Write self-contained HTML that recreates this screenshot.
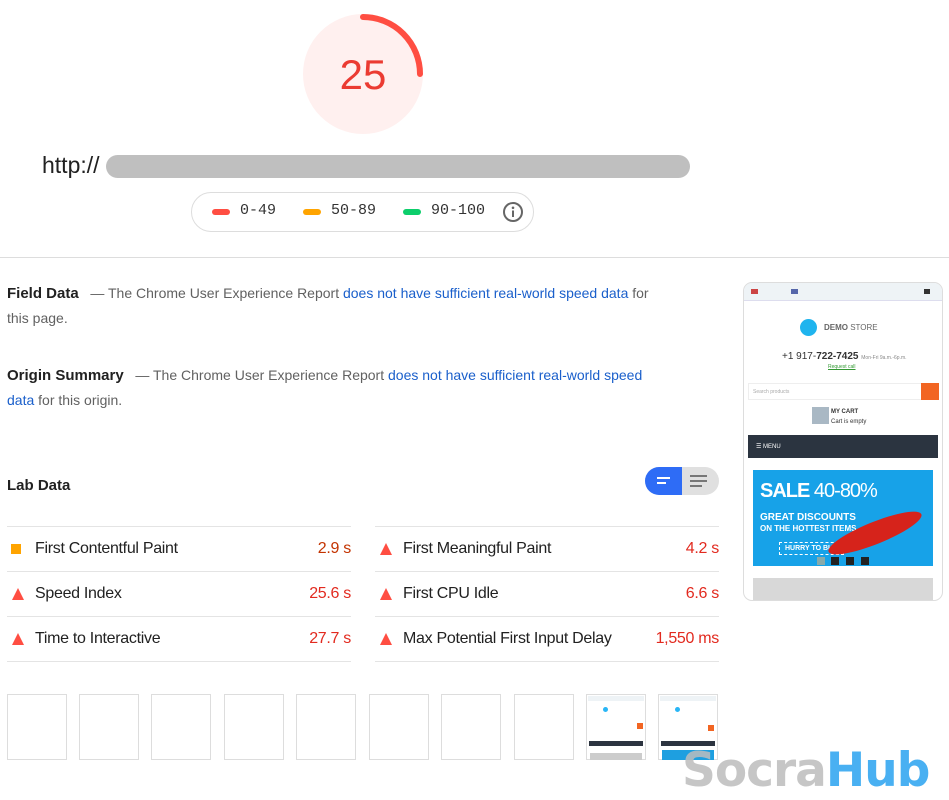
<!DOCTYPE html>
<html><head><meta charset="utf-8"><style>
*{box-sizing:border-box;margin:0;padding:0}
body{width:949px;height:800px;overflow:hidden;background:#fff;font-family:"Liberation Sans",sans-serif;position:relative;color:#212121}
.a{position:absolute}
.t{font-size:14px;color:#616161;line-height:25px}
.t b{font-weight:bold;color:#212121;font-size:15px}
.t a{color:#1a5fcb;text-decoration:none}
.row{position:absolute;height:45px;border-top:1px solid #e4e4e4;font-size:16px;display:flex;align-items:center}
.row .n{flex:1;padding-left:28px;color:#212121;letter-spacing:-.3px}
.row .v{color:#e22a1f;letter-spacing:-.3px}
.tri{position:absolute;left:5px;top:16px;width:0;height:0;border-left:6px solid transparent;border-right:6px solid transparent;border-bottom:12px solid #ff4e42}
.thumb{position:absolute;top:694px;width:60px;height:66px;border:1px solid #ddd}
</style></head><body>
<svg class="a" style="left:300px;top:11px" width="126" height="126" viewBox="0 0 126 126">
<circle cx="63" cy="63" r="60" fill="#fff0ef"/>
<path d="M63 6 A57 57 0 0 1 120 63" fill="none" stroke="#ff4e42" stroke-width="6" stroke-linecap="round"/>
<text x="63" y="78" text-anchor="middle" font-family="Liberation Sans,sans-serif" font-size="42" fill="#eb3b32" style="font-weight:300">25</text>
</svg>
<div class="a" style="left:42px;top:152px;font-size:23px;color:#212121">http://</div>
<div class="a" style="left:106px;top:155px;width:584px;height:23px;background:#bfbfbf;border-radius:12px"></div>
<div class="a" style="left:191px;top:192px;width:343px;height:40px;border:1px solid #ddd;border-radius:20px"></div>
<div class="a" style="left:212px;top:209px;width:18px;height:6px;border-radius:3px;background:#ff4e42"></div>
<div class="a" style="left:240px;top:202px;font:15px 'Liberation Mono',monospace;color:#333">0-49</div>
<div class="a" style="left:303px;top:209px;width:18px;height:6px;border-radius:3px;background:#ffa400"></div>
<div class="a" style="left:331px;top:202px;font:15px 'Liberation Mono',monospace;color:#333">50-89</div>
<div class="a" style="left:403px;top:209px;width:18px;height:6px;border-radius:3px;background:#0cce6b"></div>
<div class="a" style="left:431px;top:202px;font:15px 'Liberation Mono',monospace;color:#333">90-100</div>
<svg class="a" style="left:502px;top:201px" width="22" height="22" viewBox="0 0 22 22"><circle cx="11" cy="11" r="9" fill="none" stroke="#666" stroke-width="2"/><rect x="10" y="9.5" width="2" height="6.5" fill="#666"/><circle cx="11" cy="6.8" r="1.3" fill="#666"/></svg>
<div class="a" style="left:0;top:257px;width:949px;height:1px;background:#ddd"></div>

<div class="a t" style="left:7px;top:281px;width:660px"><b>Field Data</b> &nbsp; — The Chrome User Experience Report <a>does not have sufficient real-world speed data</a> for this page.</div>
<div class="a t" style="left:7px;top:363px;width:650px"><b>Origin Summary</b> &nbsp; — The Chrome User Experience Report <a>does not have sufficient real-world speed data</a> for this origin.</div>
<div class="a" style="left:7px;top:477px;font-size:15px;font-weight:bold;color:#212121">Lab Data</div>
<div class="a" style="left:645px;top:467px;width:74px;height:28px;border-radius:14px;background:#e0e0e0;overflow:hidden">
<div style="position:absolute;left:0;top:0;width:37px;height:28px;background:#2e6cf6"></div>
<div style="position:absolute;left:12px;top:10px;width:13px;height:2px;background:#fff"></div>
<div style="position:absolute;left:12px;top:15px;width:9px;height:2px;background:#fff"></div>
<div style="position:absolute;left:45px;top:8px;width:17px;height:2px;background:#777"></div>
<div style="position:absolute;left:45px;top:13px;width:17px;height:2px;background:#777"></div>
<div style="position:absolute;left:45px;top:18px;width:12px;height:2px;background:#777"></div>
</div>

<div class="row" style="left:7px;top:526px;width:344px"><div style="position:absolute;left:4px;top:17px;width:10px;height:10px;background:#ffa400"></div><span class="n">First Contentful Paint</span><span class="v" style="color:#c33300">2.9 s</span></div>
<div class="row" style="left:7px;top:571px;width:344px"><div class="tri"></div><span class="n">Speed Index</span><span class="v">25.6 s</span></div>
<div class="row" style="left:7px;top:616px;width:344px;border-bottom:1px solid #e4e4e4;height:46px"><div class="tri"></div><span class="n">Time to Interactive</span><span class="v">27.7 s</span></div>
<div class="row" style="left:375px;top:526px;width:344px"><div class="tri"></div><span class="n">First Meaningful Paint</span><span class="v">4.2 s</span></div>
<div class="row" style="left:375px;top:571px;width:344px"><div class="tri"></div><span class="n">First CPU Idle</span><span class="v">6.6 s</span></div>
<div class="row" style="left:375px;top:616px;width:344px;border-bottom:1px solid #e4e4e4;height:46px"><div class="tri"></div><span class="n">Max Potential First Input Delay</span><span class="v">1,550 ms</span></div>

<div class="thumb" style="left:7px"></div><div class="thumb" style="left:79px"></div><div class="thumb" style="left:151px"></div><div class="thumb" style="left:224px"></div><div class="thumb" style="left:296px"></div><div class="thumb" style="left:369px"></div><div class="thumb" style="left:441px"></div><div class="thumb" style="left:514px"></div>
<div class="thumb" style="left:586px;background:#fff"><div style="position:absolute;left:1px;top:1px;width:56px;height:5px;background:#eef3f6"></div><div style="position:absolute;left:16px;top:12px;width:5px;height:5px;border-radius:3px;background:#29b6f6"></div><div style="position:absolute;left:50px;top:28px;width:6px;height:6px;background:#f26522"></div><div style="position:absolute;left:2px;top:46px;width:54px;height:5px;background:#2c3440"></div><div style="position:absolute;left:3px;top:58px;width:52px;height:7px;background:#ccc"></div></div>
<div class="thumb" style="left:658px"><div style="position:absolute;left:1px;top:1px;width:56px;height:5px;background:#eef3f6"></div><div style="position:absolute;left:16px;top:12px;width:5px;height:5px;border-radius:3px;background:#29b6f6"></div><div style="position:absolute;left:49px;top:30px;width:6px;height:6px;background:#f26522"></div><div style="position:absolute;left:2px;top:46px;width:54px;height:5px;background:#2c3440"></div><div style="position:absolute;left:3px;top:55px;width:52px;height:10px;background:#1e9fe0"></div></div>

<div class="a" style="left:743px;top:282px;width:200px;height:319px;border:1px solid #ddd;border-radius:9px;overflow:hidden;background:#fff">
<div style="position:absolute;left:0;top:0;width:200px;height:18px;background:#eef3f6;border-bottom:1px solid #dde"></div>
<div style="position:absolute;left:7px;top:6px;width:7px;height:5px;background:#c44"></div>
<div style="position:absolute;left:47px;top:6px;width:7px;height:5px;background:#56a"></div>
<div style="position:absolute;left:180px;top:6px;width:6px;height:5px;background:#333"></div>
<div style="position:absolute;left:56px;top:36px;width:17px;height:17px;border-radius:50%;background:#1fb4ee"></div>
<div style="position:absolute;left:80px;top:40px;font-size:8px;color:#666"><b>DEMO</b> STORE</div>
<div style="position:absolute;left:38px;top:68px;font-size:10px;color:#333">+1 917-<b>722-7425</b> <span style="font-size:5px;color:#888">Mon-Fri 9a.m.-6p.m.</span></div>
<div style="position:absolute;left:84px;top:81px;font-size:5px;color:#393;text-decoration:underline">Request call</div>
<div style="position:absolute;left:4px;top:100px;width:174px;height:17px;border:1px solid #eee;font-size:5px;color:#aaa;padding:5px 4px">Search products</div>
<div style="position:absolute;left:177px;top:100px;width:18px;height:17px;background:#f26522"></div>
<div style="position:absolute;left:68px;top:124px;width:17px;height:17px;background:#a9b8c4"></div>
<div style="position:absolute;left:87px;top:124px;font-size:6px;color:#333;line-height:10px"><b>MY CART</b><br>Cart is empty</div>
<div style="position:absolute;left:4px;top:152px;width:190px;height:23px;background:#2b3440;color:#fff;font-size:6px;padding:8px 8px">☰ MENU</div>
<div style="position:absolute;left:9px;top:187px;width:180px;height:96px;background:#17a2e8;color:#fff;overflow:hidden">
<div style="position:absolute;left:7px;top:10px;font-size:20px;font-weight:bold;letter-spacing:-1px">SALE <span style="font-weight:normal">40-80%</span></div>
<div style="position:absolute;left:7px;top:42px;font-size:10px;font-weight:bold;line-height:11px">GREAT DISCOUNTS<br><span style="font-size:8px">ON THE HOTTEST ITEMS</span></div>
<div style="position:absolute;left:26px;top:72px;font-size:7px;font-weight:bold;border:1px dashed #fff;padding:2px 5px">HURRY TO BUY</div>
<div style="position:absolute;left:72px;top:52px;width:100px;height:22px;border-radius:50%;background:#d6231b;transform:rotate(-22deg)"></div>
<div style="position:absolute;left:64px;top:87px;width:8px;height:8px;background:#8aa"></div><div style="position:absolute;left:78px;top:87px;width:8px;height:8px;background:#222"></div><div style="position:absolute;left:93px;top:87px;width:8px;height:8px;background:#222"></div><div style="position:absolute;left:108px;top:87px;width:8px;height:8px;background:#222"></div>
</div>
<div style="position:absolute;left:9px;top:295px;width:180px;height:30px;background:#d8d8d8"></div>
</div>

<div class="a" style="left:682px;top:743px;font:bold 47px 'DejaVu Sans',sans-serif;letter-spacing:-1px;opacity:.85;white-space:nowrap;line-height:56px"><span style="color:#bdbdbd">Socra</span><span style="color:#2aa3f0">Hub</span></div>
</body></html>
